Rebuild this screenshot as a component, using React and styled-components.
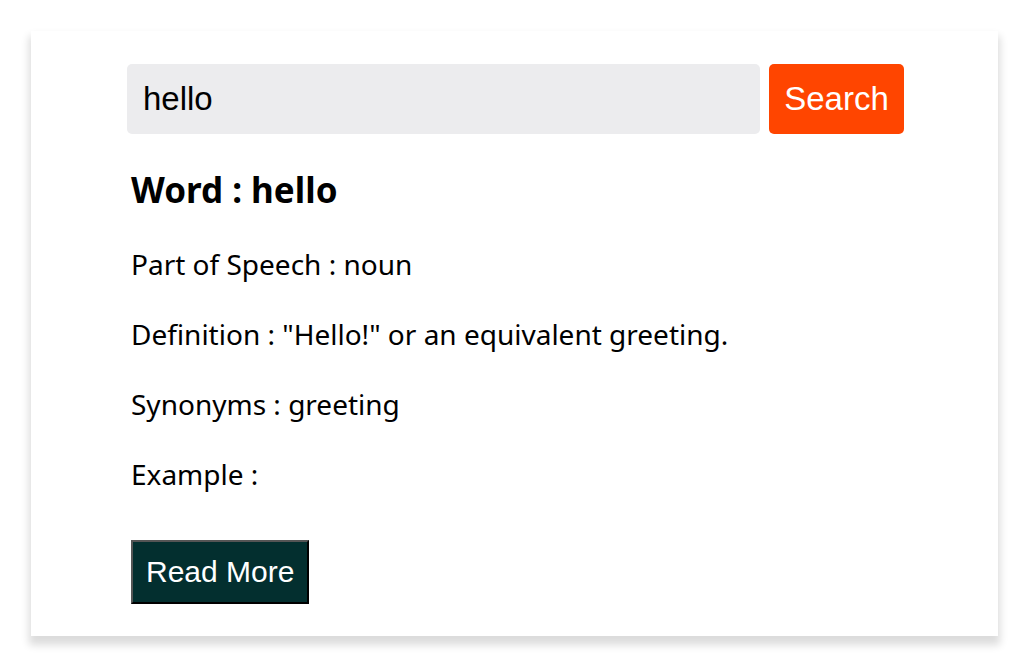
import React from 'react';
import styled, { createGlobalStyle } from 'styled-components';

const GlobalStyle = createGlobalStyle`
    body {
        margin: 0;
        background: #ffffff;
        font-family: "Noto Sans", "Open Sans", sans-serif;
    }
`;

const Card = styled.div`
    box-sizing: border-box;
    width: 967px;
    height: 605px;
    margin: 31px 0 24px 31px;
    padding: 33px 94px 0 96px;
    background: #ffffff;
    box-shadow: 0 7px 8px 2px rgba(0, 0, 0, 0.14);
`;

const SearchRow = styled.div`
    display: flex;
    gap: 9px;
    height: 70px;
`;

const SearchInput = styled.input`
    flex: 1;
    box-sizing: border-box;
    border: none;
    outline: none;
    border-radius: 5px;
    background: #ececee;
    padding: 0 16px;
    font-family: "Liberation Sans", Arial, sans-serif;
    font-size: 33px;
    color: #000;
`;

const SearchButton = styled.button`
    width: 135px;
    padding: 0;
    border: none;
    border-radius: 5px;
    background: #ff4500;
    color: #fff;
    font-family: "Liberation Sans", Arial, sans-serif;
    font-size: 33px;
    cursor: pointer;
`;

const Result = styled.div`
    padding-left: 4px;
`;

const WordTitle = styled.h2`
    margin: 34px 0 0;
    font-size: 35px;
    font-weight: 700;
    line-height: 44px;
    color: #000;
`;

const Line = styled.p`
    margin: ${(p) => (p.$first ? '17px 0 0' : '0')};
    font-size: 28px;
    line-height: 70px;
    color: #000;
`;

const ReadMore = styled.button`
    margin-top: 31px;
    height: 64px;
    padding: 0 13px;
    background: #032f2f;
    border: 2px outset #555;
    border-right-color: #000;
    border-bottom-color: #000;
    color: #fff;
    font-family: "Liberation Sans", Arial, sans-serif;
    font-size: 30px;
    cursor: pointer;
`;

const App = () => {
    return (
        <>
            <GlobalStyle />
            <Card>
                <SearchRow>
                    <SearchInput defaultValue="hello" />
                    <SearchButton>Search</SearchButton>
                </SearchRow>
                <Result>
                    <WordTitle>Word : hello</WordTitle>
                    <Line $first>Part of Speech : noun</Line>
                    <Line>Definition : "Hello!" or an equivalent greeting.</Line>
                    <Line>Synonyms : greeting</Line>
                    <Line>Example : </Line>
                    <ReadMore>Read More</ReadMore>
                </Result>
            </Card>
        </>
    );
};

export default App;
